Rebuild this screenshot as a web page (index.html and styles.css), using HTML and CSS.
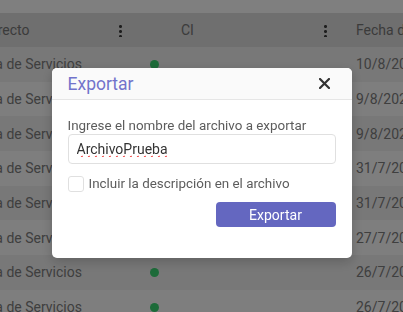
FILE: index.html
```html
<!DOCTYPE html>
<html lang="es">
<head>
    <meta charset="UTF-8">
    <meta name="viewport" content="width=device-width, initial-scale=1.0">
    <title>Exportar</title>
    <link rel="stylesheet" href="styles.css">
</head>
<body>
    <div class="toolbar"></div>

    <div class="table">
        <div class="row head">
            <div class="cell first"><span class="clip-head">Tipo Directo</span><span class="kebab"></span></div>
            <div class="cell second"><span class="ci">CI</span><span class="kebab"></span></div>
            <div class="cell third">Fecha de creación</div>
        </div>
        <div class="row odd">
            <div class="cell first"><span class="clip">Empresa de Servicios</span></div>
            <div class="cell second"><span class="dot"></span></div>
            <div class="cell third">10/8/2023</div>
        </div>
        <div class="row">
            <div class="cell first"><span class="clip">Empresa de Servicios</span></div>
            <div class="cell second"><span class="dot"></span></div>
            <div class="cell third">9/8/2023</div>
        </div>
        <div class="row odd">
            <div class="cell first"><span class="clip">Empresa de Servicios</span></div>
            <div class="cell second"><span class="dot"></span></div>
            <div class="cell third">9/8/2023</div>
        </div>
        <div class="row">
            <div class="cell first"><span class="clip">Empresa de Servicios</span></div>
            <div class="cell second"><span class="dot"></span></div>
            <div class="cell third">31/7/2023</div>
        </div>
        <div class="row odd">
            <div class="cell first"><span class="clip">Empresa de Servicios</span></div>
            <div class="cell second"><span class="dot"></span></div>
            <div class="cell third">31/7/2023</div>
        </div>
        <div class="row">
            <div class="cell first"><span class="clip">Empresa de Servicios</span></div>
            <div class="cell second"><span class="dot"></span></div>
            <div class="cell third">27/7/2023</div>
        </div>
        <div class="row odd">
            <div class="cell first"><span class="clip">Empresa de Servicios</span></div>
            <div class="cell second"><span class="dot"></span></div>
            <div class="cell third">26/7/2023</div>
        </div>
        <div class="row">
            <div class="cell first"><span class="clip">Empresa de Servicios</span></div>
            <div class="cell second"><span class="dot"></span></div>
            <div class="cell third">26/7/2023</div>
        </div>
    </div>

    <!-- modal -->
    <div class="overlay">
        <div class="dialog">
            <div class="dialog-header">
                <span class="dialog-title">Exportar</span>
                <svg class="close" width="11" height="11" viewBox="0 0 11 11">
                    <path d="M1 1 L10 10 M10 1 L1 10" stroke="#333" stroke-width="2.2" stroke-linecap="round"/>
                </svg>
            </div>
            <div class="dialog-body">
                <label for="fileName">Ingrese el nombre del archivo a exportar</label>
                <input type="text" id="fileName" value="ArchivoPrueba" autofocus>
                <div class="check-row">
                    <span class="checkbox"></span>
                    <span>Incluir la descripción en el archivo</span>
                </div>
                <button>Exportar</button>
            </div>
        </div>
    </div>
</body>
</html>
```

FILE: styles.css
```css
body {
    margin: 0;
    font-family: Roboto, "Liberation Sans", sans-serif;
    background-color: #fff;
    height: 312px;
    overflow: hidden;
}

.toolbar {
    height: 13px;
    background-color: #fff;
}

.table {
    overflow: hidden;
}

.row {
    display: grid;
    grid-template-columns: 130px 205px 1fr;
    height: 34.7px;
    background-color: #fdfdfd;
    font-size: 14px;
    color: #7e7e7e;
}

.row.odd {
    background-color: #f1f1f1;
}

.row.head {
    height: 34px;
    background-color: #dedede;
    color: #777;
}

.cell {
    display: flex;
    align-items: center;
    white-space: nowrap;
    overflow: hidden;
}

.clip {
    margin-left: -52px;
}

.clip-head {
    margin-left: -46px;
}

.first, .second {
    justify-content: space-between;
    padding-right: 8px;
}

.ci {
    margin-left: 51px;
}

.third {
    padding-left: 21px;
}

.kebab {
    width: 3px;
    height: 13px;
    background: radial-gradient(circle, #3c3c3c 1.3px, transparent 1.6px) 0 0 / 3px 5px repeat-y;
}

.dot {
    width: 9px;
    height: 9px;
    border-radius: 50%;
    background-color: #3ad673;
    margin-left: 20px;
}

/* modal */
.overlay {
    position: fixed;
    inset: 0;
    background-color: rgba(0, 0, 0, 0.5);
    display: flex;
    justify-content: center;
    align-items: flex-start;
    padding-top: 68px;
}

.dialog {
    width: 300px;
    background-color: #fff;
    border-radius: 5px;
    box-shadow: 0 4px 12px rgba(0, 0, 0, 0.2);
    overflow: hidden;
}

.dialog-header {
    height: 31px;
    display: flex;
    align-items: center;
    justify-content: space-between;
    padding: 0 22px 0 16px;
    background-color: #fafafa;
    border-bottom: 1px solid #e6e6e6;
}

.dialog-title {
    font-size: 17.5px;
    color: #7273cb;
}

.dialog-body {
    display: flex;
    flex-direction: column;
    padding: 18px 16px 31px;
}

label {
    font-size: 13.4px;
    line-height: 16px;
    color: #5c5c5c;
}

input[type="text"] {
    height: 30px;
    box-sizing: border-box;
    border: 1.5px solid #e0e0e0;
    border-radius: 4px;
    padding: 0 8px;
    font-family: inherit;
    font-size: 14px;
    color: #333;
    text-decoration: underline wavy #e33;
    text-decoration-thickness: 1px;
    outline: none;
    caret-color: #222;
}

.check-row {
    display: flex;
    align-items: center;
    gap: 5px;
    margin-top: 12px;
    font-size: 13.4px;
    line-height: 16px;
    color: #5c5c5c;
}

.checkbox {
    width: 14px;
    height: 14px;
    border: 1px solid #e0e0e0;
    border-radius: 3px;
}

button {
    align-self: flex-end;
    width: 120px;
    height: 25px;
    margin-top: 10px;
    background-color: #6467c0;
    color: #fff;
    border: none;
    border-radius: 4px;
    font-family: inherit;
    font-size: 14px;
}
```
